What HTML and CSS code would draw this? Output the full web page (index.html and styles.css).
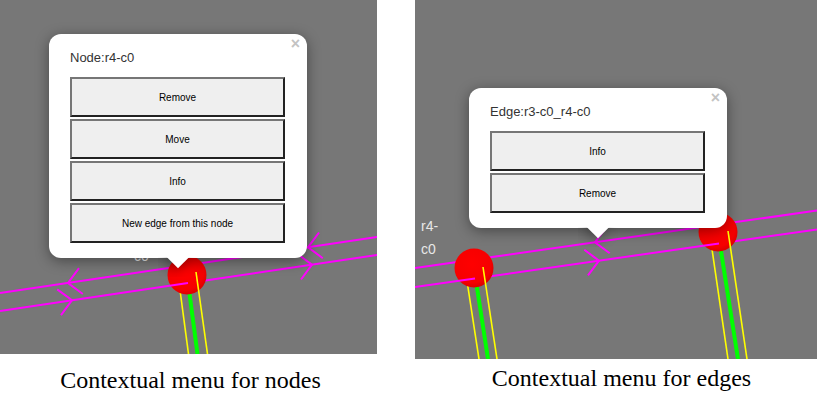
FILE: index.html
```html
<!DOCTYPE html>
<html lang="en">
<head>
    <meta charset="UTF-8">
    <meta name="viewport" content="width=device-width, initial-scale=1.0">
    <title>Contextual menus</title>
    <link rel="stylesheet" href="styles.css">
</head>
<body>
    <div class="figures">
        <div class="figure figure-nodes">
            <div class="map map-nodes">
                <svg class="graph" width="377" height="354" viewBox="0 0 377 354">
                    <defs>
                        <radialGradient id="nodeFillA" cx="45%" cy="40%" r="60%">
                            <stop offset="0" stop-color="#ff0000"/>
                            <stop offset="0.8" stop-color="#f60000"/>
                            <stop offset="1" stop-color="#dc0000"/>
                        </radialGradient>
                    </defs>
                    <g class="edge">
                        <line x1="0" y1="293" x2="377" y2="237"/>
                        <line x1="187" y1="283.2" x2="377" y2="255"/>
                        <polyline points="82.8,294 68,283 79,268.2"/>
                        <polyline points="322.8,258.2 308,247.3 319,232.5"/>
                        <polyline points="297.2,253.8 312,264.7 301,279.5"/>
                    </g>
                    <text class="label" x="134" y="261">c0</text>
                    <line class="track" x1="187" y1="275" x2="197.5" y2="354"/>
                    <line class="rail" x1="178" y1="275" x2="188.5" y2="354"/>
                    <circle cx="187" cy="275" r="19.5" fill="url(#nodeFillA)"/>
                    <line class="rail" x1="196" y1="272" x2="207.5" y2="354"/>
                    <g class="edge">
                        <line x1="0" y1="311" x2="188" y2="283"/>
                        <polyline points="61,315.1 72,300.3 57.2,289.4"/>
                    </g>
                </svg>

                <div class="popup popup-node">
                    <div class="popup-box">
                        <span class="close">&times;</span>
                        <div class="popup-title">Node:r4-c0</div>
                        <button class="menu-btn">Remove</button>
                        <button class="menu-btn">Move</button>
                        <button class="menu-btn">Info</button>
                        <button class="menu-btn">New edge from this node</button>
                    </div>
                    <div class="popup-tip-wrap"><div class="popup-tip"></div></div>
                </div>
            </div>
            <p class="caption">Contextual menu for nodes</p>
        </div>

        <div class="figure figure-edges">
            <div class="map map-edges">
                <svg class="graph" width="402" height="359" viewBox="0 0 402 359">
                    <defs>
                        <radialGradient id="nodeFillB" cx="45%" cy="40%" r="60%">
                            <stop offset="0" stop-color="#ff0000"/>
                            <stop offset="0.8" stop-color="#f60000"/>
                            <stop offset="1" stop-color="#dc0000"/>
                        </radialGradient>
                    </defs>
                    <g class="edge">
                        <line x1="0" y1="268" x2="402" y2="210.5"/>
                        <polyline points="194.7,253.3 180,242.3 191,227.6"/>
                        <line x1="304" y1="243.5" x2="402" y2="229.5"/>
                    </g>
                    <line class="track" x1="303" y1="232" x2="323" y2="359"/>
                    <line class="rail" x1="294.5" y1="232" x2="313" y2="359"/>
                    <circle cx="303" cy="232" r="19.5" fill="url(#nodeFillB)"/>
                    <line class="rail" x1="313" y1="231" x2="332" y2="359"/>
                    <g class="edge">
                        <line x1="60" y1="278.4" x2="304" y2="243.5"/>
                        <polyline points="169.3,249.7 184,260.7 173,275.4"/>
                    </g>
                    <line class="track" x1="59" y1="268" x2="73" y2="359"/>
                    <line class="rail" x1="50" y1="268" x2="64" y2="359"/>
                    <circle cx="59" cy="268" r="19.5" fill="url(#nodeFillB)"/>
                    <line class="rail" x1="68" y1="267" x2="82" y2="359"/>
                    <g class="edge">
                        <line x1="0" y1="287" x2="60" y2="278.4"/>
                    </g>
                    <text class="label" x="6" y="231">r4-</text>
                    <text class="label" x="6" y="254">c0</text>
                </svg>

                <div class="popup popup-edge">
                    <div class="popup-box">
                        <span class="close">&times;</span>
                        <div class="popup-title">Edge:r3-c0_r4-c0</div>
                        <button class="menu-btn">Info</button>
                        <button class="menu-btn">Remove</button>
                    </div>
                    <div class="popup-tip-wrap"><div class="popup-tip"></div></div>
                </div>
            </div>
            <p class="caption">Contextual menu for edges</p>
        </div>
    </div>
</body>
</html>
```

FILE: styles.css
```css
body {
    margin: 0;
    background-color: #fff;
    font-family: "Liberation Sans", Arial, sans-serif;
}

.figures {
    display: flex;
    gap: 38px;
    align-items: flex-start;
}

.figure-nodes {
    width: 377px;
}

.figure-edges {
    width: 402px;
}

.map {
    position: relative;
    background-color: #777;
    overflow: hidden;
}

.graph {
    display: block;
}

.edge line,
.edge polyline {
    stroke: #ff00ff;
    stroke-width: 2;
    fill: none;
}

.track {
    stroke: #00ff00;
    stroke-width: 4;
}

.rail {
    stroke: #ffff00;
    stroke-width: 1.6;
}

.label {
    fill: #e8e8e8;
    font-family: "Liberation Sans", Arial, sans-serif;
    font-size: 14px;
}

/* popup menu */
.popup {
    position: absolute;
    width: 258px;
}

.popup-node {
    left: 49px;
    top: 34px;
}

.popup-edge {
    left: 54px;
    top: 88px;
}

.popup-box {
    position: relative;
    background-color: #fff;
    border-radius: 12px;
    padding: 15px 22px 15px 21px;
    box-shadow: 0 3px 14px rgba(0, 0, 0, 0.4);
}

.close {
    position: absolute;
    top: 3px;
    right: 7px;
    font-size: 16px;
    line-height: 14px;
    font-weight: bold;
    color: #c3c3c3;
}

.popup-title {
    font-size: 13px;
    line-height: 17px;
    color: #333;
    margin-bottom: 11px;
}

.menu-btn {
    display: block;
    box-sizing: border-box;
    width: 100%;
    height: 40px;
    margin: 0 0 2px;
    padding: 0;
    font-family: "Liberation Sans", Arial, sans-serif;
    font-size: 10px;
    color: #000;
    background-color: #efefef;
    border: 2px solid;
    border-color: #767676 #222 #222 #767676;
}

.menu-btn:last-child {
    margin-bottom: 0;
}

.popup-tip-wrap {
    width: 40px;
    height: 20px;
    margin: -1px auto 0;
    overflow: hidden;
}

.popup-tip {
    width: 16px;
    height: 16px;
    margin: -8px auto 0;
    background-color: #fff;
    transform: rotate(45deg);
    box-shadow: 0 3px 14px rgba(0, 0, 0, 0.4);
}

.caption {
    font-family: "Liberation Serif", "Times New Roman", serif;
    font-size: 24px;
    text-align: center;
    margin: 13px 0 0;
}

.figure-nodes .caption {
    padding-left: 4px;
}

.figure-edges .caption {
    margin-top: 6px;
    padding-left: 11px;
}
```
